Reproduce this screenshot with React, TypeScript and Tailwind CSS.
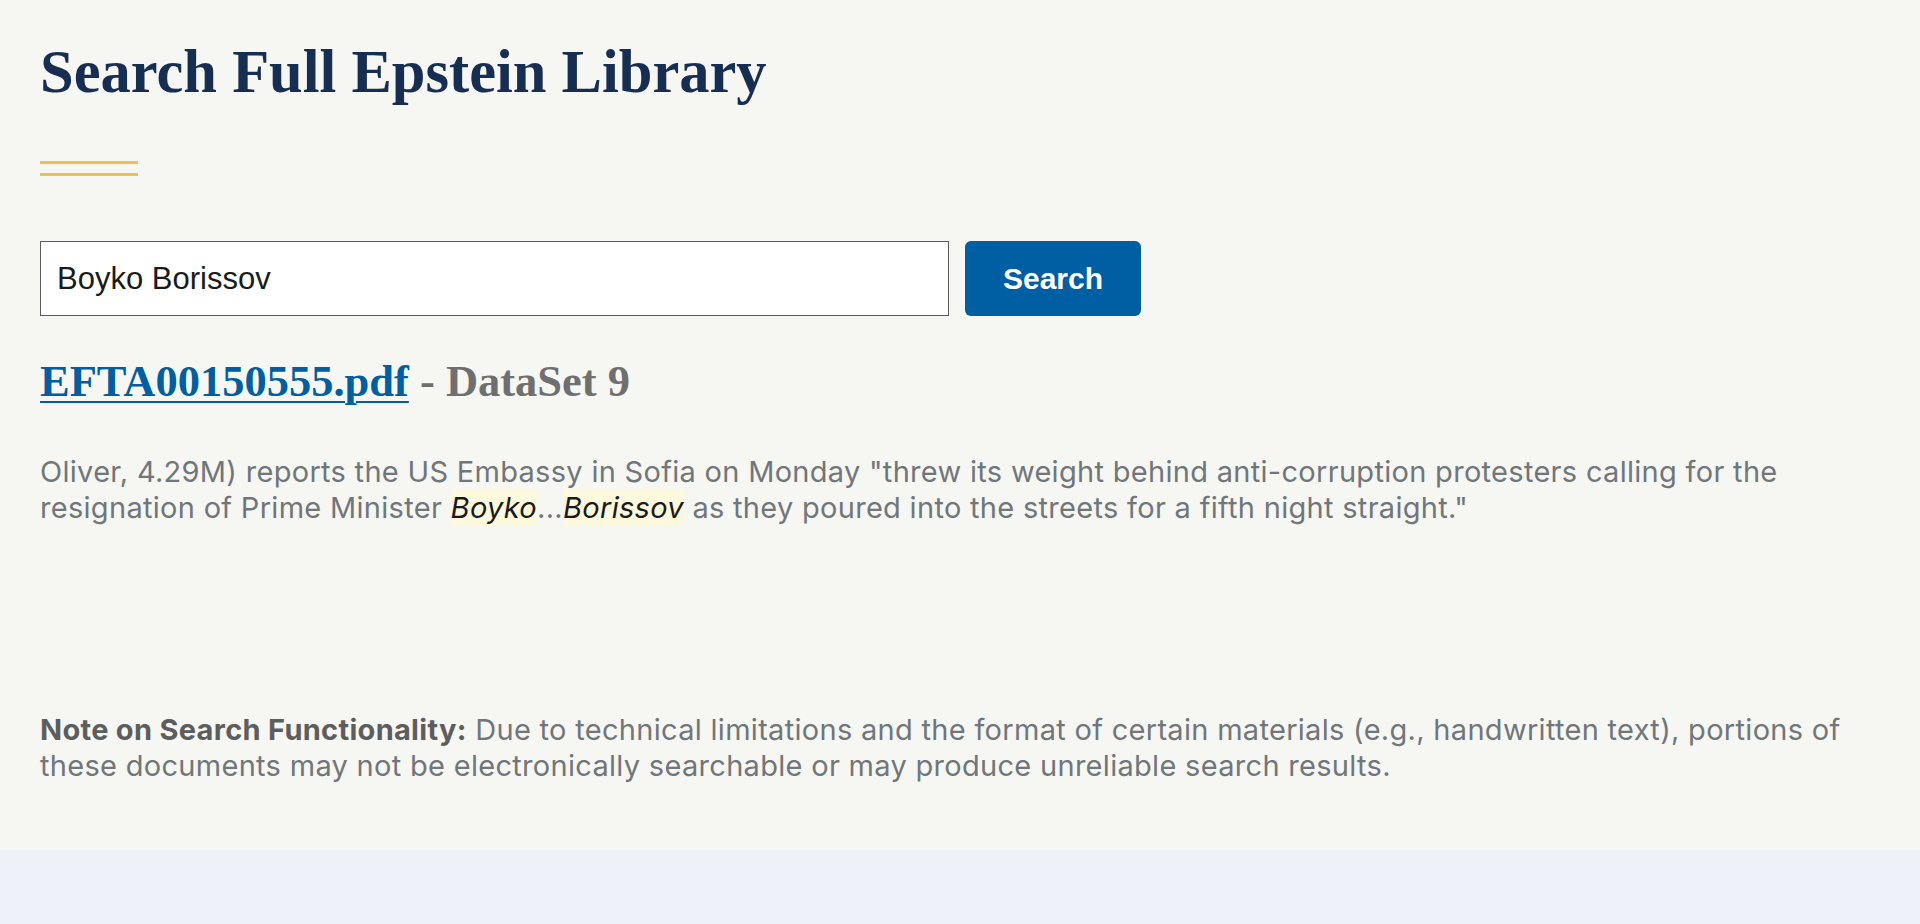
import React from 'react';

const serif = { fontFamily: '"Liberation Serif", "Times New Roman", serif' };
const sans = { fontFamily: '"Liberation Sans", Arial, sans-serif' };
const body = { fontFamily: 'Inter, "Liberation Sans", Arial, sans-serif' };

export default function App() {
  return (
    <div className="min-h-screen flex flex-col bg-[#f6f6f2]">
      <main className="px-10 pt-[42px] pb-[66px]">
        <h1 style={serif} className="text-[60.5px] leading-[60px] font-bold text-[#162e51]">
          Search Full Epstein Library
        </h1>

        <div className="mt-[59px] w-[98px] flex flex-col gap-[9px]">
          <div className="h-[3px] bg-[#f2bf4d]" />
          <div className="h-[3px] bg-[#f2bf4d]" />
        </div>

        <form className="mt-[65px] flex gap-4" onSubmit={(e) => e.preventDefault()}>
          <input
            style={sans}
            defaultValue="Boyko Borissov"
            className="w-[909px] h-[75px] bg-white border border-[#5c5c5c] px-4 text-[31px] text-[#1b1b1b] outline-none"
          />
          <button
            style={sans}
            className="w-[176px] h-[75px] rounded-[6px] bg-[#005ea2] text-white text-[30px] font-bold"
          >
            Search
          </button>
        </form>

        <h2 style={serif} className="mt-[43px] text-[44.5px] leading-[44px] font-bold text-[#6f6f6f]">
          <a href="#" className="text-[#005ea2] underline decoration-2 underline-offset-[5px]">
            EFTA00150555.pdf
          </a>{' '}
          - DataSet 9
        </h2>

        <p
          style={body}
          className="mt-[51px] text-[29px] leading-[36px] tracking-[0.3px] text-[#71767a] max-w-[1840px]"
        >
          Oliver, 4.29M) reports the US Embassy in Sofia on Monday "threw its weight behind anti-corruption
          protesters calling for the resignation of Prime Minister{' '}
          <em className="bg-[#fdf9dc] text-[#1b1b1b]">Boyko</em>...
          <em className="bg-[#fdf9dc] text-[#1b1b1b]">Borissov</em> as they poured into the streets for a fifth
          night straight."
        </p>

        <p
          style={body}
          className="mt-[186px] text-[29px] leading-[36px] tracking-[0.3px] text-[#71767a] max-w-[1840px]"
        >
          <strong className="font-bold text-[#5d5d5d]">Note on Search Functionality:</strong> Due to technical
          limitations and the format of certain materials (e.g., handwritten text), portions of these documents may
          not be electronically searchable or may produce unreliable search results.
        </p>
      </main>
      <footer className="flex-1 bg-[#edf1f7]" />
    </div>
  );
}
